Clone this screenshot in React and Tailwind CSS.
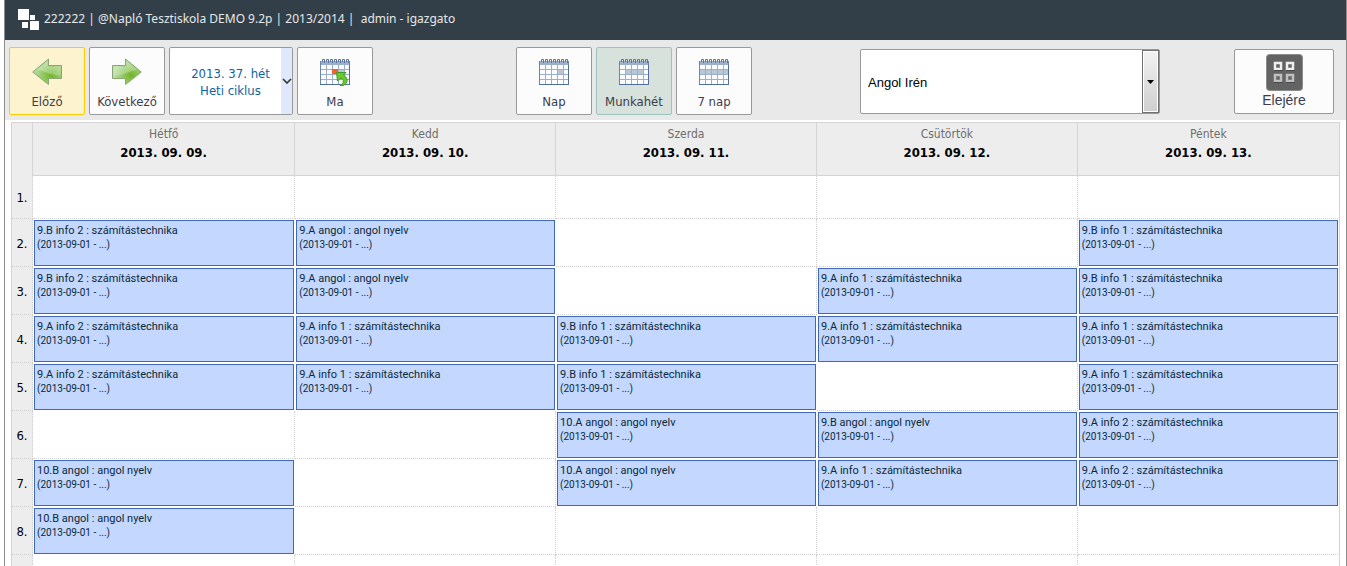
import { useState } from "react";

const days = [
  { name: "Hétfő", date: "2013. 09. 09." },
  { name: "Kedd", date: "2013. 09. 10." },
  { name: "Szerda", date: "2013. 09. 11." },
  { name: "Csütörtök", date: "2013. 09. 12." },
  { name: "Péntek", date: "2013. 09. 13." },
];

const lessons = [
  [null, null, null, null, null],
  ["9.B info 2 : számítástechnika", "9.A angol : angol nyelv", null, null, "9.B info 1 : számítástechnika"],
  ["9.B info 2 : számítástechnika", "9.A angol : angol nyelv", null, "9.A info 1 : számítástechnika", "9.B info 1 : számítástechnika"],
  [
    "9.A info 2 : számítástechnika",
    "9.A info 1 : számítástechnika",
    "9.B info 1 : számítástechnika",
    "9.A info 1 : számítástechnika",
    "9.A info 1 : számítástechnika",
  ],
  ["9.A info 2 : számítástechnika", "9.A info 1 : számítástechnika", "9.B info 1 : számítástechnika", null, "9.A info 1 : számítástechnika"],
  [null, null, "10.A angol : angol nyelv", "9.B angol : angol nyelv", "9.A info 2 : számítástechnika"],
  ["10.B angol : angol nyelv", null, "10.A angol : angol nyelv", "9.A info 1 : számítástechnika", "9.A info 2 : számítástechnika"],
  ["10.B angol : angol nyelv", null, null, null, null],
];

function Logo() {
  return (
    <svg width="21" height="22" viewBox="0 0 21 22" aria-hidden="true">
      <rect x="0" y="0" width="11" height="11" fill="#fff" />
      <rect x="12" y="6" width="5" height="5" fill="#fff" />
      <rect x="4" y="13" width="6" height="6" fill="#fff" />
      <rect x="12" y="12" width="9" height="9" fill="#fff" />
    </svg>
  );
}

function ArrowIcon({ direction }) {
  const right = direction === "right";
  const id = `arrow-${direction}`;
  return (
    <svg width="30" height="28" viewBox="0 0 30 28" aria-hidden="true">
      <defs>
        <radialGradient id={id} cx={right ? "0.65" : "0.35"} cy="0.65" r="0.6">
          <stop offset="0" stopColor="#6fb526" />
          <stop offset="0.5" stopColor="#93c964" />
          <stop offset="1" stopColor="#b9dba5" />
        </radialGradient>
      </defs>
      <g transform={right ? undefined : "translate(30 0) scale(-1 1)"}>
        <path
          d="M.5 7.5H13.5V1L29.3 14 13.5 26.5V20.5H.5Z"
          fill={right ? "url(#arrow-right)" : "url(#arrow-left)"}
          stroke="#8aa672"
          strokeLinejoin="round"
        />
        <path d="M1.5 8.5H14.5V3.2L25 12C17 12.5 13 17.5 1.5 17.5Z" fill="#fff" fillOpacity="0.25" />
      </g>
    </svg>
  );
}

function CalendarIcon({ mode }) {
  return (
    <svg width="30" height="28" viewBox="0 0 30 28" aria-hidden="true">
      <rect x="0.5" y="3.5" width="29" height="23" fill="#fbfcfe" stroke="#6a86ad" />
      <rect x="1" y="3" width="28" height="4" fill="#9db0cb" />
      {mode === "day" && <rect x="18" y="11" width="6" height="6" fill="#b9c6d6" />}
      {mode === "work" && <rect x="6" y="11" width="19" height="6" fill="#b9c6d6" />}
      {mode === "week" && <rect x="1" y="11" width="28" height="6" fill="#b9c6d6" />}
      {mode === "today" && <rect x="18" y="11" width="6" height="6" fill="#b9c6d6" />}
      <path
        d="M6.5 7V26M12.5 7V26M18.5 7V26M24.5 7V26M1 11.5H29M1 16.5H29M1 21.5H29"
        stroke="#9bafcd"
        fill="none"
      />
      <path d="M0 26.5H29.5V7" stroke="#4f6e9b" fill="none" />
      <path
        d="M2.5 4V1.5H4.5V5M6.5 4V1.5H8.5V5M10.5 4V1.5H12.5V5M14.5 4V1.5H16.5V5M18.5 4V1.5H20.5V5M22.5 4V1.5H24.5V5M26.5 4V1.5H28.5V5"
        stroke="#5a7399"
        fill="none"
      />
      {mode === "today" && (
        <>
          <rect x="12" y="11" width="6" height="5" fill="#f4602c" />
          <path
            d="M16.5 14.5 26 14.5 23.5 17C28 20 29 25 23 27.5L20 27.5C24.5 25 24 22 21 20L17.5 23Z"
            fill="#6cc62f"
            stroke="#3f9c22"
            strokeLinejoin="round"
          />
        </>
      )}
    </svg>
  );
}

function HomeIcon() {
  return (
    <svg width="37" height="37" viewBox="0 0 37 37" aria-hidden="true">
      <rect x="0.5" y="0.5" width="36" height="36" rx="3" fill="#636363" stroke="#8b8b8b" />
      <g fill="none" strokeWidth="2.5">
        <path d="M9 9H15V15H9ZM21 9H27V15H21Z" stroke="#f0f0f0" />
        <path d="M9 21H15V27H9ZM21 21H27V27H21Z" stroke="#c0c0c0" />
      </g>
      <path d="M8 16.5H17M20 16.5H29M8 28.5H17M20 28.5H29" stroke="#484848" />
    </svg>
  );
}

function ToolButton({ icon, label, className = "border-[#999] bg-[#fcfcfc]", onClick }) {
  return (
    <button
      type="button"
      onClick={onClick}
      className={`flex h-[68px] w-[76px] flex-col items-center rounded-xs border pt-[10px] text-[13px] leading-4 text-[#3c3c50] ${className}`}
    >
      {icon}
      <span className="mt-2">{label}</span>
    </button>
  );
}

function Toolbar() {
  const [view, setView] = useState("work");
  const [teacher, setTeacher] = useState("Angol Irén");

  const views = [
    { id: "day", label: "Nap" },
    { id: "work", label: "Munkahét" },
    { id: "week", label: "7 nap" },
  ];

  return (
    <div className="grid h-20 grid-cols-[511fr_344fr_374fr_112px] items-start bg-[#e9e9e9] pt-[7px]">
      <div className="flex gap-1 pl-1">
        <ToolButton
          icon={<ArrowIcon direction="left" />}
          label="Előző"
          className="border-[#fc0] bg-[#fdf3ce]"
        />
        <ToolButton icon={<ArrowIcon direction="right" />} label="Következő" />
        <button
          type="button"
          className="flex h-[68px] w-[124px] overflow-hidden rounded-xs border border-[#999] bg-white text-[13px] leading-[17px] text-[#0a64a0]"
        >
          <span className="flex-1 self-center pt-px pl-[10px] text-center">
            2013. 37. hét
            <br />
            Heti ciklus
          </span>
          <span className="flex w-[11px] items-center justify-center self-stretch bg-[#dfe8fc]">
            <svg width="10" height="6" viewBox="0 0 10 6" aria-hidden="true">
              <path d="M1 1 5 5 9 1" fill="none" stroke="#333" strokeWidth="1.6" />
            </svg>
          </span>
        </button>
        <ToolButton icon={<CalendarIcon mode="today" />} label="Ma" />
      </div>

      <div className="flex gap-1">
        {views.map((v) => (
          <ToolButton
            key={v.id}
            icon={<CalendarIcon mode={v.id} />}
            label={v.label}
            onClick={() => setView(v.id)}
            className={
              view === v.id ? "border-[#9dc3c0] bg-[#d7e2dc]" : "border-[#999] bg-[#fcfcfc]"
            }
          />
        ))}
      </div>

      <div className="mt-[2px] flex h-[65px] w-[300px] rounded-xs border border-[#999] bg-white">
        <input
          type="text"
          aria-label="Tanár"
          value={teacher}
          onChange={(e) => setTeacher(e.target.value)}
          className="min-w-0 flex-1 px-[7px] pt-[2px] font-['Liberation_Sans',sans-serif] text-[13px] text-black outline-none"
        />
        <button
          type="button"
          aria-label="Lista megnyitása"
          className="flex w-[17px] items-center justify-center border border-[#707070] bg-linear-to-b from-[#f2f2f2] to-[#cfcfcf] inset-ring inset-ring-white"
        >
          <svg width="7" height="4" viewBox="0 0 7 4" aria-hidden="true">
            <path d="M0 0H7L3.5 4Z" fill="#000" />
          </svg>
        </button>
      </div>

      <button
        type="button"
        className="mt-[2px] flex h-[65px] w-[100px] flex-col items-center rounded-xs border border-[#999] bg-[#fcfcfc] pt-1 font-['Liberation_Sans',sans-serif] text-[14px] leading-4 text-[#3c3c50]"
      >
        <HomeIcon />
        <span className="mt-px">Elejére</span>
      </button>
    </div>
  );
}

function Lesson({ title }) {
  return (
    <div className="h-[46px] border border-[#4068b4] bg-[#c3d7ff] pt-[3px] pl-[2px] font-['Roboto',sans-serif] text-[#0a2a3a]">
      <p className="text-[11px] leading-[14px]">{title}</p>
      <p className="text-[10px] leading-[14px]">(2013-09-01 - ...)</p>
    </div>
  );
}

function Timetable() {
  return (
    <table className="w-full table-fixed border-separate border-spacing-0 border-t border-l border-[#d4d4d4]">
      <thead>
        <tr className="h-[53px] bg-[#ededed]">
          <th className="w-[21px] border-r border-[#d4d4d4] p-0" aria-label="Óra"></th>
          {days.map((day) => (
            <th
              key={day.date}
              scope="col"
              className="border-r border-b border-[#d4d4d4] p-0 pt-[2px] align-top font-normal nth-2:w-[19.75%] last:w-[19.75%]"
            >
              <div className="text-[12px] leading-[18px] text-[#6e6e6e]">{day.name}</div>
              <div className="text-[13px] leading-5 font-bold text-black">{day.date}</div>
            </th>
          ))}
        </tr>
      </thead>
      <tbody>
        {lessons.map((row, i) => (
          <tr key={i} className={i === 0 ? "h-[43px]" : "h-12"}>
            <th
              scope="row"
              className="border-r border-b border-dotted border-[#cfcfcf] bg-[#ededed] p-0 pt-[2px] text-center text-[13px] leading-4 font-normal text-black"
            >
              {i + 1}.
            </th>
            {row.map((title, j) => (
              <td
                key={j}
                className={`border-r border-b py-0 align-top ${title ? "border-white" : "border-dotted border-[#cfcfcf]"} ${
                  j === 4
                    ? "border-r-[#d4d4d4] [border-right-style:solid] px-px"
                    : "pr-0 pl-px"
                } ${title ? "pt-px" : ""}`}
              >
                {title && <Lesson title={title} />}
              </td>
            ))}
          </tr>
        ))}
        <tr className="h-12">
          <td className="border-r border-dotted border-[#cfcfcf] bg-[#ededed] p-0"></td>
          {days.map((day) => (
            <td
              key={day.date}
              className="border-r border-dotted border-[#cfcfcf] p-0 last:border-solid last:border-[#d4d4d4]"
            ></td>
          ))}
        </tr>
      </tbody>
    </table>
  );
}

export default function App() {
  return (
    <div className="ml-1 h-screen overflow-hidden border-x border-[#8c8c8c] bg-white font-['DejaVu_Sans_Condensed','DejaVu_Sans',sans-serif]">
      <header className="flex h-10 items-center bg-[#333f48] pl-[13px] font-['Noto_Sans',sans-serif] text-[12px] text-[#e4e8ea]">
        <Logo />
        <h1 className="-mt-[2px] ml-[5px] whitespace-pre">
          {"222222 | @Napló Tesztiskola DEMO 9.2p | 2013/2014 |  admin - igazgato"}
        </h1>
      </header>
      <Toolbar />
      <main className="pt-[2px] pr-[6px] pl-[6px]">
        <Timetable />
      </main>
    </div>
  );
}
